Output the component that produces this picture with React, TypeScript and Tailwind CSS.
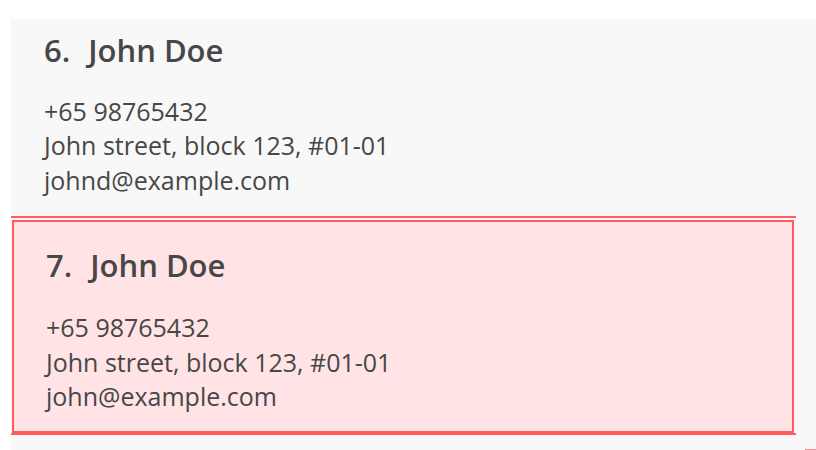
const people = [
  { id: 6, name: "John Doe", phone: "+65 98765432", address: "John street, block 123, #01-01", email: "johnd@example.com" },
  { id: 7, name: "John Doe", phone: "+65 98765432", address: "John street, block 123, #01-01", email: "john@example.com" },
];

type Person = (typeof people)[number];

function CardBody({ person, gap }: { person: Person; gap: string }) {
  return (
    <>
      <div className="flex h-[40px] items-center gap-[18px] text-[31px] font-semibold leading-none">
        <span>{person.id}.</span>
        <span>{person.name}</span>
      </div>
      <div className={`${gap} text-[25px] leading-[34.5px]`}>
        <p>{person.phone}</p>
        <p>{person.address}</p>
        <p>{person.email}</p>
      </div>
    </>
  );
}

export default function App() {
  const [first, second] = people;
  return (
    <div
      className="h-[450px] w-[816px] overflow-hidden bg-white pl-[11px] pt-[19px] text-[#474747]"
      style={{ fontFamily: '"Open Sans", "Noto Sans", sans-serif' }}
    >
      <div className="flex h-[431px] flex-col bg-[#f8f8f8]">
        <div className="h-[197px] w-[785px] pl-[33px] pt-[11px]">
          <CardBody person={first} gap="mt-[23.5px]" />
        </div>

        <div className="h-[219px] w-[785px] border-y-2 border-[#ff5b61] pl-[1px] pr-[2px] pt-[2px]">
          <div className="h-[213px] border-2 border-[#ff5b61] bg-[#ffe3e5] pl-[32px] pt-[23px]">
            <CardBody person={second} gap="mt-[25px]" />
          </div>
        </div>

        <div className="mt-auto flex justify-end">
          <span className="h-px w-[11px] bg-[#ff8a8e]" />
        </div>
      </div>
    </div>
  );
}
